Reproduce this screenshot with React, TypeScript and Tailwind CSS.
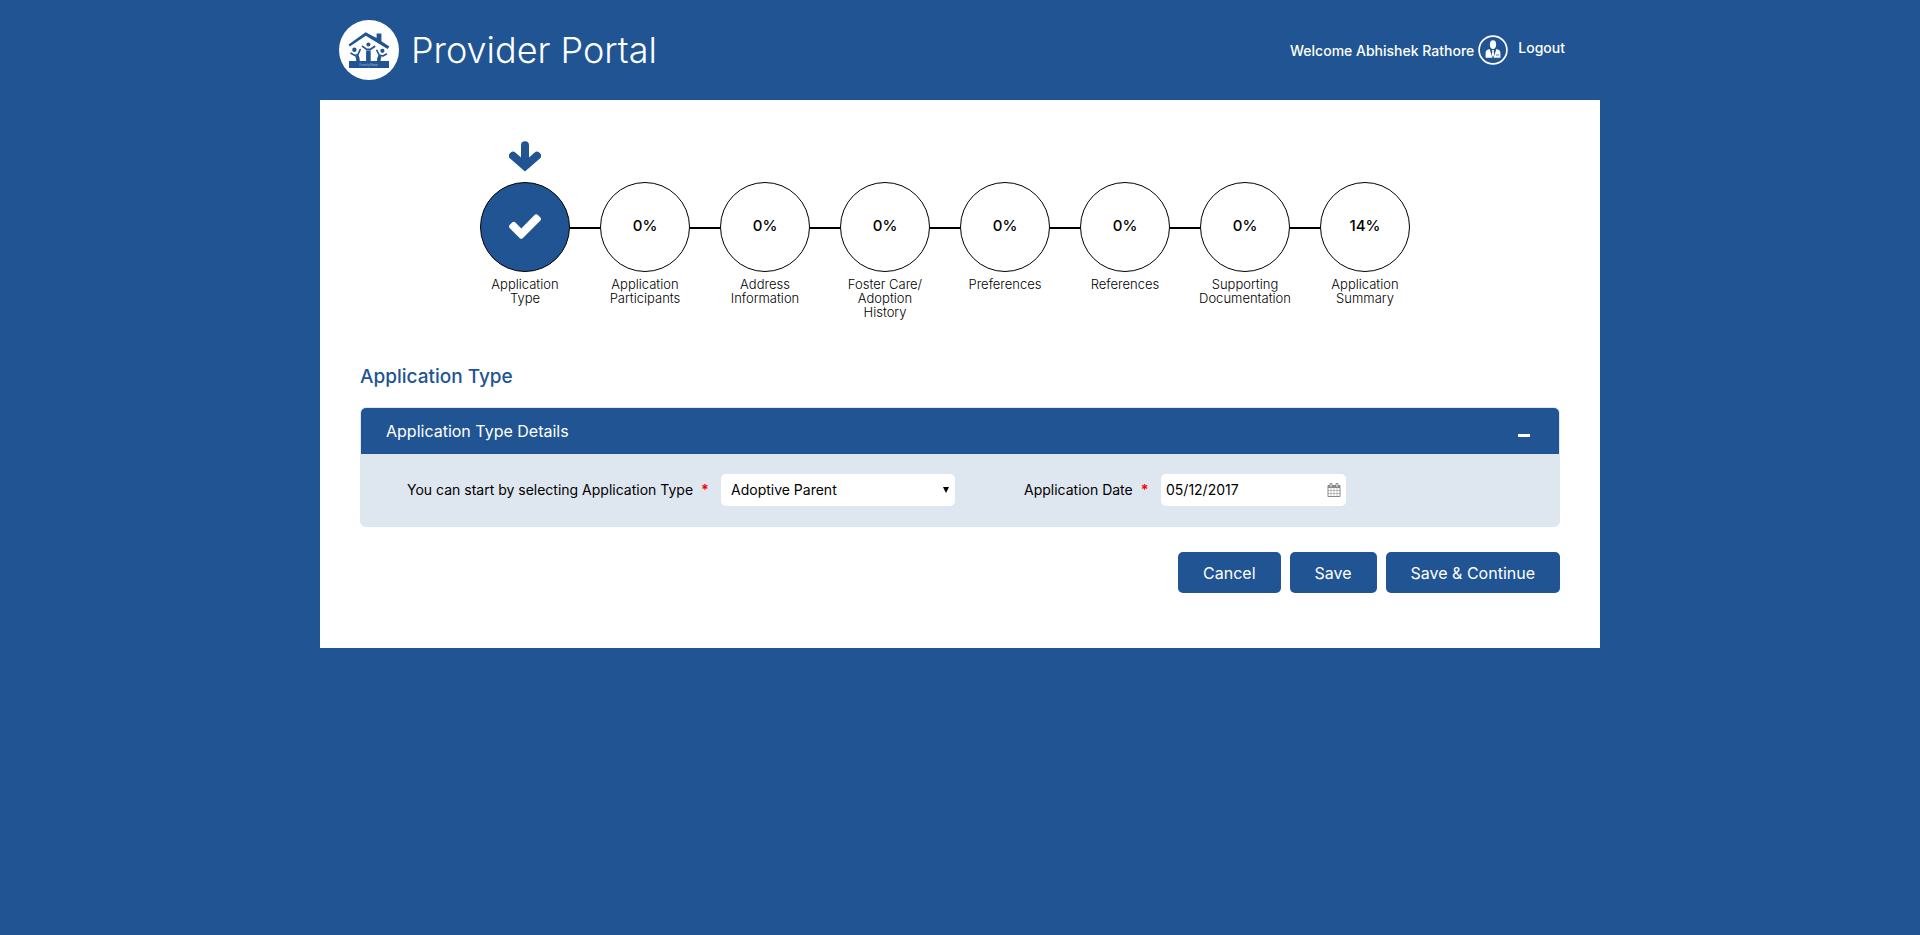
import React, { useState } from "react";

type Step = { lines: string[]; progress: number | "done" };

const steps: Step[] = [
  { lines: ["Application", "Type"], progress: "done" },
  { lines: ["Application", "Participants"], progress: 0 },
  { lines: ["Address", "Information"], progress: 0 },
  { lines: ["Foster Care/", "Adoption", "History"], progress: 0 },
  { lines: ["Preferences"], progress: 0 },
  { lines: ["References"], progress: 0 },
  { lines: ["Supporting", "Documentation"], progress: 0 },
  { lines: ["Application", "Summary"], progress: 14 },
];

function Logo() {
  return (
    <svg viewBox="0 0 60 60" className="size-[60px] shrink-0" aria-hidden="true">
      <circle cx="30" cy="30" r="30" fill="#fff" />
      <g fill="#205493">
        <path d="M9.6 24.4 26.6 12.3 37.6 18V13.6H42.4V21.2L50.4 26.6 48.6 29 26.8 15.8 10.8 26.4Z" />
        <circle cx="29.4" cy="24.6" r="2" />
        <circle cx="15.4" cy="29.8" r="2.2" />
        <circle cx="43.4" cy="30.8" r="2.1" />
        <rect x="10" y="41" width="40" height="7" />
      </g>
      <g fill="none" stroke="#205493" strokeLinecap="round" strokeLinejoin="round">
        <path d="M23.6 26.4 27.6 29.4H31.2L35.6 26.4" strokeWidth="1.8" />
        <path d="M29.4 30.5V41" strokeWidth="4.6" strokeLinecap="butt" />
        <path d="M12 33.2 15.6 35.4 19 34.4 21.2 29.6" strokeWidth="1.6" />
        <path d="M17.8 35.4Q19 38 19 41" strokeWidth="3.6" strokeLinecap="butt" />
        <path d="M47.6 34 43.8 36 40.2 35 37.8 30.4" strokeWidth="1.6" />
        <path d="M41 35.8Q39.8 38 39.8 41" strokeWidth="3.6" strokeLinecap="butt" />
      </g>
      <text x="29.5" y="46" textAnchor="middle" fontSize="3.6" fill="#b9cce2" fontFamily="Inter, sans-serif">
        FamilyNow
      </text>
    </svg>
  );
}

function UserIcon() {
  return (
    <svg viewBox="0 0 30 30" className="size-[30px] shrink-0" aria-hidden="true">
      <circle cx="15" cy="15" r="13.9" fill="none" stroke="#fff" strokeWidth="1.7" />
      <ellipse cx="15" cy="9.6" rx="3.1" ry="4.4" fill="#fff" />
      <path
        d="M7.6 22.8V18.2Q7.6 15.2 10.2 14.5L11.6 14 14.4 22.8ZM15.6 22.8 18.4 14 19.8 14.5Q22.4 15.2 22.4 18.2V22.8Z"
        fill="#fff"
      />
      <path d="M14 15H16L15.7 16.4 16.2 20 15 22.2 13.8 20 14.3 16.4Z" fill="#fff" />
      <path d="M18 20H21" stroke="#205493" strokeWidth="0.8" />
    </svg>
  );
}

function ArrowDown() {
  return (
    <svg viewBox="0 0 96 92" className="h-[31px] w-8" fill="none" stroke="#205493" strokeWidth="24" strokeLinecap="round" aria-hidden="true">
      <path d="M48 12V70" />
      <path d="M12 44 48 75 84 44" strokeLinejoin="miter" />
      <path d="M36 56H60V74H36Z" fill="#205493" stroke="none" />
    </svg>
  );
}

function Check() {
  return (
    <svg viewBox="121 334 1550 1188" className="h-[25px] w-8" fill="#fff" role="img" aria-label="Complete">
      <path d="M1671 566q0 40-28 68l-724 724-136 136q-28 28-68 28t-68-28l-136-136-362-362q-28-28-28-68t28-68l136-136q28-28 68-28t68 28l294 295 656-657q28-28 68-28t68 28l136 136q28 28 28 68z" />
    </svg>
  );
}

function CalendarIcon() {
  return (
    <svg viewBox="0 0 1792 1792" className="size-[14px]" fill="#888" aria-hidden="true">
      <path d="M192 1664h288v-288h-288v288zm352 0h320v-288h-320v288zm-352-352h288v-320h-288v320zm352 0h320v-320h-320v320zm-352-384h288v-288h-288v288zm736 736h320v-288h-320v288zm-384-736h320v-288h-320v288zm768 736h288v-288h-288v288zm-384-352h320v-320h-320v320zm-352-864v-288q0-13-9.5-22.5t-22.5-9.5h-64q-13 0-22.5 9.5t-9.5 22.5v288q0 13 9.5 22.5t22.5 9.5h64q13 0 22.5-9.5t9.5-22.5zm736 864h288v-320h-288v320zm-384-384h320v-288h-320v288zm384 0h288v-288h-288v288zm32-480v-288q0-13-9.5-22.5t-22.5-9.5h-64q-13 0-22.5 9.5t-9.5 22.5v288q0 13 9.5 22.5t22.5 9.5h64q13 0 22.5-9.5t9.5-22.5zm384-64v1280q0 52-38 90t-90 38h-1408q-52 0-90-38t-38-90v-1280q0-52 38-90t90-38h128v-96q0-66 47-113t113-47h64q66 0 113 47t47 113v96h384v-96q0-66 47-113t113-47h64q66 0 113 47t47 113v96h128q52 0 90 38t38 90z" />
    </svg>
  );
}

function StepItem({ step, last }: { step: Step; last: boolean }) {
  const done = step.progress === "done";
  return (
    <li className="flex w-[120px] shrink-0 flex-col">
      <div className="flex h-[42px] w-[90px] items-start justify-center pt-px">{done && <ArrowDown />}</div>
      <div className="flex items-center">
        <span
          className={
            "flex size-[90px] shrink-0 items-center justify-center rounded-full border border-black pb-0.5 text-[15px] font-medium " +
            (done ? "bg-[#205493]" : "bg-white")
          }
        >
          {done ? <Check /> : `${step.progress}%`}
        </span>
        {!last && <span className="mt-0.5 h-0.5 flex-1 bg-black" />}
      </div>
      <a href="#" className="mt-[5px] flex w-[90px] flex-col items-center text-[13px] leading-[14px] whitespace-nowrap">
        {step.lines.map((line) => (
          <span key={line}>{line}</span>
        ))}
      </a>
    </li>
  );
}

const buttonClass = "h-[41px] rounded-[5px] bg-[#205493] px-[25px] text-base font-normal text-white";

export default function App() {
  const [open, setOpen] = useState(true);
  return (
    <div className="min-h-screen bg-[#205493] font-['Century_Gothic','URW_Gothic',Inter,sans-serif] font-light text-black">
      <div className="mx-auto max-w-[1280px]">
        <header className="flex h-[100px] items-center justify-between pr-[35px] pl-[19px] text-white">
          <div className="flex items-center gap-3">
            <Logo />
            <h1 className="text-4xl">Provider Portal</h1>
          </div>
          <div className="flex items-center text-sm font-medium">
            <span className="mr-1 pt-0.5">Welcome Abhishek Rathore</span>
            <UserIcon />
            <a href="#" className="ml-2.5 pb-1">
              Logout
            </a>
          </div>
        </header>

        <main className="bg-white px-10 pt-10 pb-[55px]">
          <ol className="ml-[120px] flex h-[210px]">
            {steps.map((step, i) => (
              <StepItem key={i} step={step} last={i === steps.length - 1} />
            ))}
          </ol>

          <h2 className="mt-[15px] text-[19px] leading-6 font-medium text-[#205493]">Application Type</h2>

          <section className="mt-[18px] overflow-hidden rounded-md border border-[#dee6ef] bg-[#dee6ef]">
            <div className="flex h-[46px] items-center justify-between bg-[#205493] pr-[29px] pl-[25px] text-white">
              <h3 className="text-base font-normal">Application Type Details</h3>
              <button type="button" aria-label="Toggle details" aria-expanded={open} onClick={() => setOpen(!open)} className="flex h-5 items-end pb-1">
                <span className="h-[3px] w-3 bg-white" />
              </button>
            </div>
            {open && (
              <div className="flex h-[72px] items-center pl-[46px] text-sm">
                <div className="flex w-[617px] items-center justify-between pr-[69px]">
                  <label htmlFor="type" className="font-normal whitespace-nowrap">
                    You can start by selecting Application Type <span className="ml-1 font-bold text-[#f00]">*</span>
                  </label>
                  <div className="relative flex">
                    <select id="type" defaultValue="Adoptive Parent" className="h-8 w-[234px] appearance-none rounded-[5px] bg-white pr-6 pl-2.5 font-normal">
                      <option>Adoptive Parent</option>
                      <option>Foster Parent</option>
                    </select>
                    <svg viewBox="0 0 6 6" className="pointer-events-none absolute top-[13px] right-1.5 size-1.5" aria-hidden="true">
                      <path d="M0 0H6L3 6Z" />
                    </svg>
                  </div>
                </div>
                <div className="flex w-[322px] items-center justify-between">
                  <label htmlFor="date" className="font-normal whitespace-nowrap">
                    Application Date <span className="ml-1 font-bold text-[#f00]">*</span>
                  </label>
                  <div className="flex h-8 w-[185px] items-center rounded-[5px] bg-white px-[5px]">
                    <input id="date" type="text" defaultValue="05/12/2017" className="min-w-0 flex-1 bg-transparent font-normal" />
                    <CalendarIcon />
                  </div>
                </div>
              </div>
            )}
          </section>

          <div className="mt-[25px] flex justify-end gap-[9px]">
            <button type="button" className={buttonClass}>Cancel</button>
            <button type="button" className={buttonClass}>Save</button>
            <button type="button" className={buttonClass}>Save &amp; Continue</button>
          </div>
        </main>
      </div>
    </div>
  );
}
